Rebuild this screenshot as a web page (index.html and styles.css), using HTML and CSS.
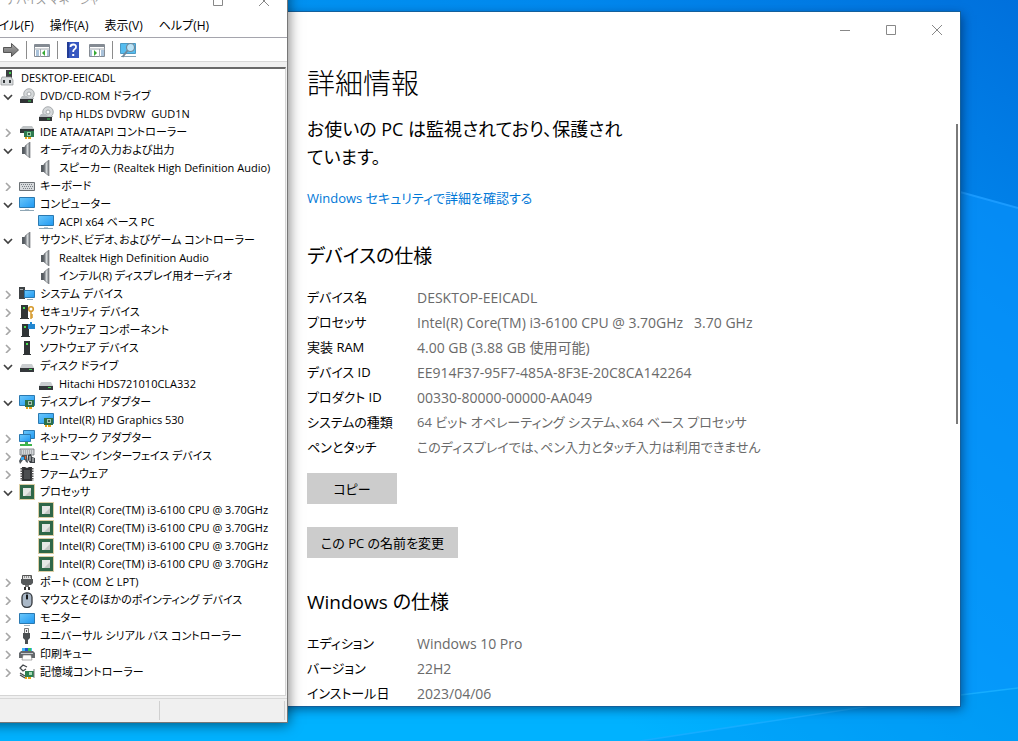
FILE: index.html
```
<!DOCTYPE html>
<html lang="ja">

<head>
    <meta charset="UTF-8">
    <meta name="viewport" content="width=device-width, initial-scale=1.0">
    <title>デバイス マネージャー</title>
    <link rel="stylesheet" href="styles.css">
</head>

<body>
    <!-- shared icons -->
    <svg class="sprite" aria-hidden="true">
        <defs>
            <linearGradient id="g-screen" x1="0" y1="0" x2="1" y2="1">
                <stop offset="0" stop-color="#6cc8fb" />
                <stop offset="1" stop-color="#1e98f2" />
            </linearGradient>
            <linearGradient id="g-metal" x1="0" y1="0" x2="1" y2="0">
                <stop offset="0" stop-color="#5c6268" />
                <stop offset="0.5" stop-color="#d4d8da" />
                <stop offset="1" stop-color="#6d7276" />
            </linearGradient>
            <linearGradient id="g-arrow" x1="0" y1="0" x2="0" y2="1">
                <stop offset="0" stop-color="#a8a8a8" />
                <stop offset="1" stop-color="#6c6c6c" />
            </linearGradient>
        </defs>
        <symbol id="open" viewBox="0 0 10 10"><path d="M1 4l4 4 4-4" fill="none" stroke="#404040" stroke-width="1.7" /></symbol>
        <symbol id="closed" viewBox="0 0 10 10"><path d="M3 2l4 4-4 4" fill="none" stroke="#a6a6a6" stroke-width="1.6" /></symbol>
        <symbol id="root" viewBox="0 0 16 16">
            <path d="M6 0h6v9H6z" fill="#3c3f41" /><path d="M9 2h2v2H9z" fill="#3fd04a" />
            <path d="M2 7h9l2 3v5H1v-5z" fill="#d9dcde" stroke="#8c9093" stroke-width=".7" />
            <path d="M3 10h2v3H3zM9 10h2v3H9z" fill="#33383b" />
        </symbol>
        <symbol id="dvd" viewBox="0 0 16 16">
            <circle cx="10" cy="6" r="5.3" fill="#d5d8da" stroke="#8d9194" stroke-width=".7" />
            <circle cx="10" cy="6" r="2" fill="#fff" stroke="#a5a9ac" />
            <path d="M3 8h5l2 2h5v1H1z" fill="#b9bdc0" /><path d="M1 11h13v4H1z" fill="#303335" />
            <path d="M9 12.500h3v1H9z" fill="#39d353" />
        </symbol>
        <symbol id="ide" viewBox="0 0 16 16">
            <path d="M4 2h9l2 3v1H1V5z" fill="#c0c4c6" /><path d="M1 5h14v4H1z" fill="#33373a" />
            <path d="M5 7h10v6H5z" fill="#2f7a50" /><path d="M8 8h4v4H8z" fill="#8fd3a4" /><path d="M9 9h2v2H9z" fill="#33473a" />
            <path d="M6 13h2v2H6zM9 13h3v2H9z" fill="#e5a51b" />
        </symbol>
        <symbol id="speaker" viewBox="0 0 16 16">
            <path d="M3 5h3v7H3z" fill="#565c61" /><path d="M6 4l5-4v16l-5-4z" fill="url(#g-metal)" stroke="#757a7e" stroke-width=".7" />
        </symbol>
        <symbol id="keyboard" viewBox="0 0 16 16">
            <path d="M.5 4.500h15v8H.5z" fill="#d7dadd" stroke="#6d7276" />
            <path d="M2 6.500h12M3 8.500h12M4 10.500h9" stroke="#7a8085" stroke-dasharray="1 1" />
        </symbol>
        <symbol id="monitor" viewBox="0 0 16 16">
            <path d="M.5 1.500h15v10H.5z" fill="url(#g-screen)" stroke="#2b79b0" />
            <path d="M6 13h4v1H6z" fill="#b4c8d4" /><path d="M1 14h14v1H1z" fill="#8fa6b4" />
        </symbol>
        <symbol id="display" viewBox="0 0 16 16">
            <path d="M.5 3.500h15v10H.5z" fill="url(#g-screen)" stroke="#2b79b0" /><path d="M5 15h6v1H5z" fill="#9eb2bf" />
        </symbol>
        <symbol id="system" viewBox="0 0 16 16">
            <path d="M0 1h6v12H0z" fill="#3e4245" /><path d="M1 3h3v1H1z" fill="#a9adb0" />
            <path d="M5.500 4.500h10v7h-10z" fill="url(#g-screen)" stroke="#2b79b0" /><path d="M8 13h6v1H8z" fill="#8fa6b4" />
        </symbol>
        <symbol id="security" viewBox="0 0 16 16">
            <path d="M2 1h7v13H2zM1 14h9v1H1z" fill="#303436" /><path d="M4 3h2v2H4z" fill="#4be052" />
            <circle cx="12" cy="5" r="2.300" fill="#fff" stroke="#d69a2d" stroke-width="1.600" />
            <path d="M12 7v8M12 11h2M12 13h2" stroke="#d69a2d" stroke-width="1.500" />
        </symbol>
        <symbol id="component" viewBox="0 0 16 16">
            <path d="M3 2h7v12H3zM2 14h9v1H2z" fill="#303436" /><path d="M5 4h2v2H5z" fill="#4be052" />
            <path d="M9 2h2V0h2v2h3v5H9z" fill="#2186d0" />
        </symbol>
        <symbol id="software" viewBox="0 0 16 16">
            <path d="M5 1h6v13H5zM4 14h8v1H4z" fill="#303436" /><path d="M7 3h2v2H7z" fill="#4be052" />
        </symbol>
        <symbol id="disk" viewBox="0 0 16 16">
            <path d="M3 6h10l2 4H1z" fill="#cacdd0" /><path d="M1 10h14v4H1z" fill="#34383b" /><path d="M10 11h3v1h-3z" fill="#43d755" />
        </symbol>
        <symbol id="adapter" viewBox="0 0 16 16">
            <path d="M.5 1.500h15v10H.5z" fill="url(#g-screen)" stroke="#2b79b0" />
            <path d="M6 6h9v7H6z" fill="#2d7048" /><path d="M9 7h4v4H9z" fill="#a4c9b0" /><path d="M10 8h2v2h-2z" fill="#475a50" />
            <path d="M7 13h2v2H7zM10 13h3v2h-3z" fill="#e7a41a" />
        </symbol>
        <symbol id="network" viewBox="0 0 16 16">
            <path d="M4.500.5h11v8h-11z" fill="url(#g-screen)" stroke="#2b79b0" />
            <path d="M.5 4.500h11v7H.5z" fill="url(#g-screen)" stroke="#2b79b0" />
            <path d="M6 12h3v2h4v2H1v-2h5z" fill="#3db44b" />
        </symbol>
        <symbol id="hid" viewBox="0 0 16 16">
            <path d="M1 1h14v6H1z" fill="#d4d7da" stroke="#6d7276" stroke-width=".8" /><path d="M2 3h12M2 5h12" stroke="#858a8e" stroke-dasharray="1 1" />
            <path d="M3 7h5l1 8-2-1-1-2H4l-3 4-1-3z" fill="#50565b" /><path d="M2 9h3v3H2z" fill="#39a6f0" /><path d="M6 8h1v3H6z" fill="#e2602e" />
            <path d="M9 7l3-1 1 3 3 1v5h-5l-2-3z" fill="#3b4045" /><path d="M11 8v5M14 10v4" stroke="#e4e6e8" />
        </symbol>
        <symbol id="firmware" viewBox="0 0 16 16">
            <path d="M3 1h3l2 1 2-1h3v14H3z" fill="#303234" /><path d="M2.500 2v13M13.500 2v13" stroke="#555" stroke-dasharray="1.500 1" stroke-width="2" />
            <path d="M5 4h6v9H5z" fill="#4b4e50" />
        </symbol>
        <symbol id="cpu" viewBox="0 0 16 16">
            <path d="M1 1h14v14H1z" fill="#2f6748" />
            <path d="M.5.5h15v15H.5z" fill="none" stroke="#b99d4a" stroke-dasharray="1 1" />
            <path d="M4 4h8v8H4z" fill="#e5e7e5" /><path d="M12 6v6H6z" fill="#c3c6c4" />
        </symbol>
        <symbol id="port" viewBox="0 0 16 16">
            <path d="M3.500 1.500h9v4h-9z" fill="#e1e1e1" stroke="#555" /><path d="M5 3h7" stroke="#444" stroke-dasharray="1 1" />
            <path d="M2 5h12v4l-2 2H4L2 9z" fill="#55585a" /><path d="M6 11h4v2H6z" fill="#777" /><path d="M5 13h2v3H5zM9 13h2v3H9z" fill="#333" />
        </symbol>
        <symbol id="mouse" viewBox="0 0 16 16">
            <rect x="3" y=".8" width="10" height="14.500" rx="4.500" fill="#aab8c7" stroke="#33383d" stroke-width="1.300" />
            <path d="M8 1v7" stroke="#33383d" /><path d="M8 3v4" stroke="#16181a" stroke-width="2" />
        </symbol>
        <symbol id="usb" viewBox="0 0 16 16">
            <path d="M5.500.5h4v5h-4z" fill="#f1f1f1" stroke="#777" /><path d="M7.500 2v2" stroke="#555" />
            <path d="M4 5h7v5l-2 2H6l-2-2z" fill="#4b4f52" /><path d="M6 12h3v4H6z" fill="#4b4f52" />
        </symbol>
        <symbol id="printer" viewBox="0 0 16 16">
            <path d="M3 2h10v3H3z" fill="#44b9f4" /><path d="M9 2h3v3H9z" fill="#38c456" /><path d="M6 2h3v3H6z" fill="#1d57d0" />
            <path d="M2 5h12l2 2v5H0V7z" fill="#64696d" /><path d="M2 7.500h12" stroke="#c4c8cb" /><path d="M4 9h8l1 5H3z" fill="#fff" stroke="#777" stroke-width=".6" />
        </symbol>
        <symbol id="storage" viewBox="0 0 16 16">
            <path d="M8 3L4 1 1 4l3 3 3-2M1 9l5 3M1 11l5 3" fill="none" stroke="#42474b" stroke-width="1.300" />
            <path d="M6 7h9v6H6z" fill="#2d8050" /><path d="M10 8h3v3h-3z" fill="#a7dab7" />
            <path d="M15 5v9" stroke="#777" /><path d="M6 13h2v2H6zM9 13h3v2H9z" fill="#e8a51b" />
        </symbol>
    </svg>

    <svg class="wallpaper" viewBox="0 0 1018 741" preserveAspectRatio="none" aria-hidden="true">
        <path d="M960 192L1018 208V688L960 696z" fill="#0a96ff" opacity=".5" />
        <path d="M960 192L1018 208" stroke="#1a9bff" stroke-width="2" />
        <path d="M640 741L870 706 1018 688V741z" fill="#0096f4" opacity=".4" />
        <path d="M640 741L870 706 1018 688" fill="none" stroke="#16adff" stroke-width="1.500" />
    </svg>

    <main class="window settings">
        <div class="caption">
            <button aria-label="最小化"><svg viewBox="0 0 12 12"><path d="M1 6.500h10" /></svg></button>
            <button aria-label="最大化"><svg viewBox="0 0 12 12"><path d="M1.500 1.500h9v9h-9z" /></svg></button>
            <button aria-label="閉じる"><svg viewBox="0 0 12 12"><path d="M1 1l10 10M11 1L1 11" /></svg></button>
        </div>
        <h1>詳細情報</h1>
        <p class="status">お使いの PC は監視されており、保護され<br>ています。</p>
        <a class="link" href="#security">Windows セキュリティで詳細を確認する</a>

        <h2>デバイスの仕様</h2>
        <dl class="specs">
            <dt>デバイス名</dt>
            <dd>DESKTOP-EEICADL</dd>
            <dt>プロセッサ</dt>
            <dd>Intel(R) Core(TM) i3-6100 CPU @ 3.70GHz &nbsp; 3.70 GHz</dd>
            <dt>実装 RAM</dt>
            <dd>4.00 GB (3.88 GB 使用可能)</dd>
            <dt>デバイス ID</dt>
            <dd>EE914F37-95F7-485A-8F3E-20C8CA142264</dd>
            <dt>プロダクト ID</dt>
            <dd>00330-80000-00000-AA049</dd>
            <dt>システムの種類</dt>
            <dd class="long">64 ビット オペレーティング システム、x64 ベース プロセッサ</dd>
            <dt>ペンとタッチ</dt>
            <dd class="long">このディスプレイでは、ペン入力とタッチ入力は利用できません</dd>
        </dl>
        <div class="actions">
            <button class="action">コピー</button>
            <button class="action">この PC の名前を変更</button>
        </div>

        <h2>Windows の仕様</h2>
        <dl class="specs">
            <dt>エディション</dt>
            <dd>Windows 10 Pro</dd>
            <dt>バージョン</dt>
            <dd>22H2</dd>
            <dt>インストール日</dt>
            <dd>2023/04/06</dd>
        </dl>
        <div class="scroll-thumb"></div>
    </main>

    <section class="window manager">
        <header class="titlebar">
            <span>デバイス マネージャー</span>
            <button aria-label="最大化"><svg viewBox="0 0 12 12"><path d="M1.500 1.500h9v9h-9z" /></svg></button>
            <button aria-label="閉じる"><svg viewBox="0 0 12 12"><path d="M1 1l10 10M11 1L1 11" /></svg></button>
        </header>
        <nav class="menubar">
            <button>ファイル(F)</button>
            <button>操作(A)</button>
            <button>表示(V)</button>
            <button>ヘルプ(H)</button>
        </nav>
        <div class="toolbar">
            <button aria-label="進む"><svg viewBox="0 0 18 18"><path d="M1.500 6.500h8v-4L16.500 9l-7 6.500v-4h-8z" fill="url(#g-arrow)" stroke="#555" /></svg></button>
            <i class="separator"></i>
            <button aria-label="コンソール ツリー"><svg viewBox="0 0 18 18"><path d="M1.500 3.500h15v12h-15z" fill="#fff" stroke="#848b93" /><path d="M1 4h16v2H1z" fill="#848b93" /><path d="M1 8h16M7.500 8v8" stroke="#a0a7ae" /><path d="M3 10h3M3 12h3M3 14h3M14 10h2M14 12h2M14 14h2" stroke="#5585b5" /><path d="M12 9v6l-3-3z" fill="#37a935" /></svg></button>
            <i class="separator"></i>
            <button aria-label="ヘルプ"><svg viewBox="0 0 18 18"><path d="M3 1h12v16H3z" fill="#3657c0" /><path d="M3 1h2v16H3z" fill="#223c94" /><path d="M6.500 6q0-2.500 2.800-2.500T12 6q0 1.500-1.500 2.300T9.200 11" fill="none" stroke="#fff" stroke-width="1.800" /><path d="M8.200 13h2v2h-2z" fill="#fff" /></svg></button>
            <button aria-label="操作ウィンドウ"><svg viewBox="0 0 18 18"><path d="M1.500 3.500h15v12h-15z" fill="#fff" stroke="#848b93" /><path d="M1 4h16v2H1z" fill="#848b93" /><path d="M1 8h16M11.500 8v8" stroke="#a0a7ae" /><path d="M13 10h3M13 12h3M13 14h3M2 10h2M2 12h2M2 14h2" stroke="#5585b5" /><path d="M6 9v6l3-3z" fill="#37a935" /></svg></button>
            <i class="separator"></i>
            <button aria-label="ハードウェア変更のスキャン"><svg viewBox="0 0 18 18"><path d="M1.500 2.500h15v10h-15z" fill="#55bdf0" stroke="#4c9ac4" /><path d="M2 15.500h15" stroke="#8ba5b5" /><circle cx="11.500" cy="6.500" r="4" fill="#b9e3f7" stroke="#71889a" stroke-width="1.200" /><path d="M8.500 9.500L3.500 16" stroke="#71889a" stroke-width="2" /></svg></button>
        </div>
        <div class="pane">
            <div class="row root"><svg><use href="#root" /></svg><span>DESKTOP-EEICADL</span></div>
            <ul class="tree">
                <li>
                    <div class="row"><button aria-label="折りたたむ"><svg><use href="#open" /></svg></button><svg><use href="#dvd" /></svg><span>DVD/CD-ROM ドライブ</span></div>
                    <ul>
                        <li class="row"><svg><use href="#dvd" /></svg><span>hp HLDS DVDRW &nbsp;GUD1N</span></li>
                    </ul>
                </li>
                <li class="row"><button aria-label="展開"><svg><use href="#closed" /></svg></button><svg><use href="#ide" /></svg><span>IDE ATA/ATAPI コントローラー</span></li>
                <li>
                    <div class="row"><button aria-label="折りたたむ"><svg><use href="#open" /></svg></button><svg><use href="#speaker" /></svg><span>オーディオの入力および出力</span></div>
                    <ul>
                        <li class="row"><svg><use href="#speaker" /></svg><span>スピーカー (Realtek High Definition Audio)</span></li>
                    </ul>
                </li>
                <li class="row"><button aria-label="展開"><svg><use href="#closed" /></svg></button><svg><use href="#keyboard" /></svg><span>キーボード</span></li>
                <li>
                    <div class="row"><button aria-label="折りたたむ"><svg><use href="#open" /></svg></button><svg><use href="#monitor" /></svg><span>コンピューター</span></div>
                    <ul>
                        <li class="row"><svg><use href="#monitor" /></svg><span>ACPI x64 ベース PC</span></li>
                    </ul>
                </li>
                <li>
                    <div class="row"><button aria-label="折りたたむ"><svg><use href="#open" /></svg></button><svg><use href="#speaker" /></svg><span>サウンド、ビデオ、およびゲーム コントローラー</span></div>
                    <ul>
                        <li class="row"><svg><use href="#speaker" /></svg><span>Realtek High Definition Audio</span></li>
                        <li class="row"><svg><use href="#speaker" /></svg><span>インテル(R) ディスプレイ用オーディオ</span></li>
                    </ul>
                </li>
                <li class="row"><button aria-label="展開"><svg><use href="#closed" /></svg></button><svg><use href="#system" /></svg><span>システム デバイス</span></li>
                <li class="row"><button aria-label="展開"><svg><use href="#closed" /></svg></button><svg><use href="#security" /></svg><span>セキュリティ デバイス</span></li>
                <li class="row"><button aria-label="展開"><svg><use href="#closed" /></svg></button><svg><use href="#component" /></svg><span>ソフトウェア コンポーネント</span></li>
                <li class="row"><button aria-label="展開"><svg><use href="#closed" /></svg></button><svg><use href="#software" /></svg><span>ソフトウェア デバイス</span></li>
                <li>
                    <div class="row"><button aria-label="折りたたむ"><svg><use href="#open" /></svg></button><svg><use href="#disk" /></svg><span>ディスク ドライブ</span></div>
                    <ul>
                        <li class="row"><svg><use href="#disk" /></svg><span>Hitachi HDS721010CLA332</span></li>
                    </ul>
                </li>
                <li>
                    <div class="row"><button aria-label="折りたたむ"><svg><use href="#open" /></svg></button><svg><use href="#adapter" /></svg><span>ディスプレイ アダプター</span></div>
                    <ul>
                        <li class="row"><svg><use href="#adapter" /></svg><span>Intel(R) HD Graphics 530</span></li>
                    </ul>
                </li>
                <li class="row"><button aria-label="展開"><svg><use href="#closed" /></svg></button><svg><use href="#network" /></svg><span>ネットワーク アダプター</span></li>
                <li class="row"><button aria-label="展開"><svg><use href="#closed" /></svg></button><svg><use href="#hid" /></svg><span>ヒューマン インターフェイス デバイス</span></li>
                <li class="row"><button aria-label="展開"><svg><use href="#closed" /></svg></button><svg><use href="#firmware" /></svg><span>ファームウェア</span></li>
                <li>
                    <div class="row"><button aria-label="折りたたむ"><svg><use href="#open" /></svg></button><svg><use href="#cpu" /></svg><span>プロセッサ</span></div>
                    <ul>
                        <li class="row"><svg><use href="#cpu" /></svg><span>Intel(R) Core(TM) i3-6100 CPU @ 3.70GHz</span></li>
                        <li class="row"><svg><use href="#cpu" /></svg><span>Intel(R) Core(TM) i3-6100 CPU @ 3.70GHz</span></li>
                        <li class="row"><svg><use href="#cpu" /></svg><span>Intel(R) Core(TM) i3-6100 CPU @ 3.70GHz</span></li>
                        <li class="row"><svg><use href="#cpu" /></svg><span>Intel(R) Core(TM) i3-6100 CPU @ 3.70GHz</span></li>
                    </ul>
                </li>
                <li class="row"><button aria-label="展開"><svg><use href="#closed" /></svg></button><svg><use href="#port" /></svg><span>ポート (COM と LPT)</span></li>
                <li class="row"><button aria-label="展開"><svg><use href="#closed" /></svg></button><svg><use href="#mouse" /></svg><span>マウスとそのほかのポインティング デバイス</span></li>
                <li class="row"><button aria-label="展開"><svg><use href="#closed" /></svg></button><svg><use href="#display" /></svg><span>モニター</span></li>
                <li class="row"><button aria-label="展開"><svg><use href="#closed" /></svg></button><svg><use href="#usb" /></svg><span>ユニバーサル シリアル バス コントローラー</span></li>
                <li class="row"><button aria-label="展開"><svg><use href="#closed" /></svg></button><svg><use href="#printer" /></svg><span>印刷キュー</span></li>
                <li class="row"><button aria-label="展開"><svg><use href="#closed" /></svg></button><svg><use href="#storage" /></svg><span>記憶域コントローラー</span></li>
            </ul>
        </div>
        <footer class="statusbar">
            <div></div>
            <div></div>
        </footer>
    </section>
</body>

</html>
```
FILE: styles.css
```
* {
    box-sizing: border-box;
}

body {
    margin: 0;
    position: relative;
    height: 100vh;
    overflow: hidden;
    font-family: "Open Sans", "Noto Sans CJK JP", sans-serif;
    font-feature-settings: "palt";
    color: #000;
    background: linear-gradient(to bottom left, #0070dc 0%, #0088ee 22%, #0099f4 45%, #00b2ff 68%);
}

ul, dl, dd, h1, h2, p {
    margin: 0;
    padding: 0;
}

ul {
    list-style: none;
}

button {
    padding: 0;
    border: 0;
    background: none;
    color: inherit;
    font: inherit;
    font-feature-settings: inherit;
}

.sprite {
    position: absolute;
    width: 0;
    height: 0;
}

.wallpaper {
    position: absolute;
    width: 100%;
    height: 100%;
}

/* both windows float on the desktop */
.window {
    position: absolute;
    overflow: hidden;
    background: #fff;
}

/* settings */
.settings {
    top: 12px;
    right: 58px;
    bottom: 35px;
    left: 200px;
    padding-left: 107px;
    font-size: 13px;
    box-shadow: 0 0 0 1px #14609c, 2px 3px 10px rgba(0, 30, 70, 0.6);
}

.caption {
    display: flex;
    justify-content: flex-end;
    height: 32px;
}

.caption button {
    width: 46px;
}

.caption svg, .titlebar svg {
    width: 12px;
    height: 12px;
    fill: none;
    stroke: #888;
    vertical-align: middle;
}

.settings h1 {
    margin-top: 19px;
    font-size: 28px;
    font-weight: 300;
    line-height: 40px;
}

.status {
    margin-top: 12px;
    font-size: 18px;
    line-height: 28px;
}

.link {
    display: block;
    margin: 15px 0 32px;
    line-height: 24px;
    color: #0078d7;
    text-decoration: none;
}

.settings h2 {
    margin-top: 30px;
    font-size: 19px;
    font-weight: 400;
    line-height: 28px;
}

.specs {
    display: grid;
    grid-template-columns: 110px 1fr;
    grid-auto-rows: 25px;
    margin-top: 15px;
    line-height: 25px;
    white-space: nowrap;
}

.specs dd {
    font-size: 14px;
    color: #6a6a6a;
}

.specs .long {
    font-size: 13px;
}

.actions {
    display: flex;
    flex-direction: column;
    align-items: flex-start;
    gap: 23px;
    margin-top: 13px;
}

.action {
    min-width: 90px;
    height: 31px;
    padding: 0 14px;
    background: #ccc;
}

.scroll-thumb {
    position: absolute;
    top: 112px;
    right: 2px;
    width: 2px;
    height: 300px;
    background: #7a7a7a;
}

/* device manager, partly off the left and top edges */
.manager {
    top: -16px;
    bottom: 19px;
    left: -24px;
    display: flex;
    flex-direction: column;
    width: 311px;
    font-size: 11px;
    background: #f0f0f0;
    box-shadow: 0 0 0 1px #777, 2px 3px 12px rgba(0, 0, 0, 0.5);
}

.titlebar {
    display: flex;
    height: 31px;
    padding-left: 30px;
    background: #fff;
    color: #999;
    line-height: 31px;
}

.titlebar span {
    flex: 1;
}

.titlebar button {
    width: 46px;
}

.menubar {
    display: flex;
    gap: 16px;
    height: 23px;
    padding-left: 3px;
    border-bottom: 1px solid #a5a5ad;
    background: #fff;
    font-size: 12px;
    line-height: 22px;
    white-space: nowrap;
}

.toolbar {
    display: flex;
    align-items: center;
    gap: 6px;
    height: 24px;
    padding-left: 26px;
    border-bottom: 1px solid #d8d8d8;
    background: #fff;
}

.toolbar svg {
    display: block;
    width: 18px;
    height: 18px;
}

.separator {
    width: 1px;
    height: 18px;
    background: #8c8c8c;
}

.pane {
    flex: 1;
    margin: 5px 1px 2px 0;
    padding-left: 23px;
    border: 1px solid #d5d5d5;
    border-top: 2px solid #696969;
    background: #fff;
}

.row {
    display: flex;
    align-items: center;
    height: 18px;
    line-height: 18px;
    white-space: nowrap;
}

.row > svg {
    flex: none;
    width: 16px;
    height: 16px;
    margin-right: 5px;
}

.row button {
    width: 19px;
    height: 18px;
    padding-left: 3px;
    text-align: left;
}

.row button svg {
    display: block;
    width: 10px;
    height: 10px;
}

.tree ul {
    padding-left: 38px;
}

.statusbar {
    display: flex;
    height: 24px;
    padding: 2px 2px 2px 0;
    border-top: 1px solid #d8d8d8;
}

.statusbar div {
    flex: 1 0 124px;
    border-right: 1px solid #d0d0d0;
}

.statusbar div:first-child {
    flex: none;
    width: 184px;
}
```
